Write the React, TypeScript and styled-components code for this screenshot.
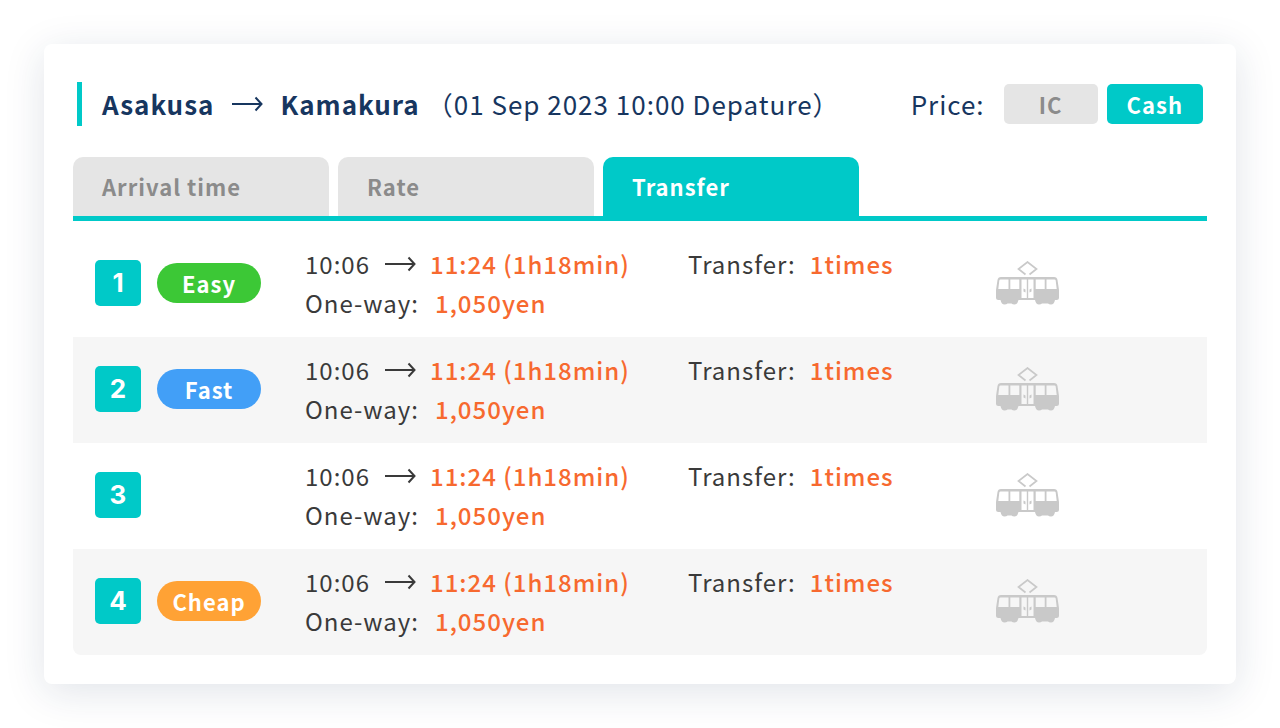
import React, { useState } from "react";
import styled, { createGlobalStyle } from "styled-components";

const teal = "#00c9c8";
const navy = "#17365f";
const orange = "#f7692f";

const GlobalStyle = createGlobalStyle`
  *, *::before, *::after { box-sizing: border-box; }
  body {
    margin: 0;
    background: #fff;
    color: #3a3a3a;
    font-family: "Noto Sans CJK JP", "Noto Sans", sans-serif;
    font-size: 24px;
    line-height: 39px;
    letter-spacing: 1px;
  }
  button { font: inherit; letter-spacing: inherit; border: 0; cursor: pointer; }
`;

const Page = styled.main`
  padding: 44px;
`;

const Card = styled.section`
  padding: 38px 29px 29px;
  border-radius: 8px;
  background: #fff;
  box-shadow: 0 8px 40px rgba(24, 44, 84, 0.13);
`;

const Header = styled.header`
  display: flex;
  align-items: center;
  justify-content: space-between;
  padding: 0 4px;
  color: ${navy};
  font-size: 26px;
  line-height: 44px;
`;

const Route = styled.h1`
  display: flex;
  align-items: center;
  margin: 0;
  padding-left: 20px;
  border-left: 5px solid ${teal};
  font-size: inherit;
  font-weight: 700;
`;

const HeaderArrow = styled.span`
  display: flex;
  padding: 0 17px;
`;

const Departure = styled.span`
  padding-left: 7px;
  font-weight: 400;
`;

const PriceGroup = styled.div`
  display: flex;
  align-items: center;
  gap: 9px;
`;

const PriceLabel = styled.span`
  padding-right: 10px;
`;

const PriceButton = styled.button<{ $active: boolean }>`
  min-width: 94px;
  height: 40px;
  padding: 0 20px;
  border-radius: 5px;
  background: ${(p) => (p.$active ? teal : "#e5e5e5")};
  color: ${(p) => (p.$active ? "#fff" : "#8b8b8b")};
  font-size: 22px;
  font-weight: 700;
  line-height: 40px;
`;

const Tabs = styled.div`
  display: flex;
  gap: 9px;
  margin-top: 31px;
  border-bottom: 5px solid ${teal};
`;

const Tab = styled.button<{ $active: boolean }>`
  flex: 0 1 256px;
  height: 59px;
  padding: 0 29px;
  border-radius: 10px 10px 0 0;
  background: ${(p) => (p.$active ? teal : "#e5e5e5")};
  color: ${(p) => (p.$active ? "#fff" : "#8b8b8b")};
  font-size: 22px;
  font-weight: 700;
  text-align: left;
`;

const Results = styled.ol`
  margin: 10px 0 0;
  padding: 0;
  list-style: none;
`;

const Result = styled.li`
  display: grid;
  grid-template-columns: 62px 148px 383px minmax(0, 1fr) 211px;
  align-items: center;
  padding: 13px 0 15px 22px;
  &:nth-child(even) { background: #f6f6f6; }
  &:last-child { border-radius: 0 0 8px 8px; }
`;

const Rank = styled.span`
  width: 46px;
  height: 46px;
  border-radius: 5px;
  background: ${teal};
  color: #fff;
  font-family: Inter, sans-serif;
  font-weight: 700;
  font-size: 26px;
  line-height: 46px;
  letter-spacing: 0;
  text-align: center;
`;

const Badge = styled.span<{ $color: string }>`
  display: block;
  width: 104px;
  border-radius: 20px;
  background: ${(p) => p.$color};
  color: #fff;
  font-size: 22px;
  font-weight: 700;
  line-height: 40px;
  text-align: center;
`;

const Line = styled.div`
  display: flex;
  align-items: center;
  gap: 14px;
`;

const Fare = styled(Line)`
  gap: 16px;
`;

const Strong = styled.strong`
  color: ${orange};
  font-weight: 500;
`;

const TransferCell = styled.div`
  align-self: start;
`;

const Arrow = () => (
  <svg width="32" height="16" viewBox="0 0 32 16" fill="none" stroke="currentColor" strokeWidth="2" aria-hidden="true">
    <path d="M1 8H30M24.500 1.500L30.500 8l-6 6.500" />
  </svg>
);

const Train = () => (
  <svg width="63" height="44" viewBox="0 0 63 44" fill="#c9c9c9" role="img" aria-label="Train">
    <path d="M29.500 13.500L22.500 8L31.500 1L40.500 8L33.500 13.500" fill="none" stroke="#c9c9c9" strokeWidth="1.700" />
    <path
      fillRule="evenodd"
      d="M5 16h53q3 0 3.500 3L63 29v7.500q0 2.500-2.500 2.500H59q-1 4.500-4 4.500-2 0-3-1h-6q-1 1-3 1-3 0-4-4.500H22.500q-1 4.500-4 4.500-2 0-3-1h-4q-1 1-3 1-3 0-4-4.500H2.500Q0 39 0 36.500V29l1.500-10Q2 16 5 16z
      M4.500 18.500q-1 0-1.200 1L2.300 28h10.200v-9.500z M14.300 18.500V28h9v-9.500z M25.500 18.500V37h5.300V18.500z M32.200 18.500V37h5.300V18.500z M39.700 18.500V28h9v-9.500z M50.500 18.500V28h10.200l-1-8.500q-.2-1-1.200-1z"
    />
    <path d="M27.500 27.500l2 1v3l-2-1zM35.500 27.500l-2 1v3l2-1z" />
  </svg>
);

type Row = { badge?: string; color?: string };
const rows: Row[] = [
  { badge: "Easy", color: "#3cc836" },
  { badge: "Fast", color: "#429ff7" },
  {},
  { badge: "Cheap", color: "#ffa235" },
];
const tabs = ["Arrival time", "Rate", "Transfer"];
const prices = ["IC", "Cash"];

export default function App() {
  const [tab, setTab] = useState("Transfer");
  const [price, setPrice] = useState("Cash");
  return (
    <Page>
      <GlobalStyle />
      <Card>
        <Header>
          <Route>
            Asakusa
            <HeaderArrow><Arrow /></HeaderArrow>
            Kamakura
            <Departure>（01 Sep 2023 10:00 Depature）</Departure>
          </Route>
          <PriceGroup role="group" aria-labelledby="price-label">
            <PriceLabel id="price-label">Price:</PriceLabel>
            {prices.map((p) => (
              <PriceButton key={p} type="button" $active={p === price} aria-pressed={p === price} onClick={() => setPrice(p)}>
                {p}
              </PriceButton>
            ))}
          </PriceGroup>
        </Header>
        <Tabs role="tablist">
          {tabs.map((t) => (
            <Tab key={t} type="button" role="tab" $active={t === tab} aria-selected={t === tab} onClick={() => setTab(t)}>
              {t}
            </Tab>
          ))}
        </Tabs>
        <Results>
          {rows.map((row, i) => (
            <Result key={i}>
              <Rank>{i + 1}</Rank>
              <div>{row.badge && <Badge $color={row.color!}>{row.badge}</Badge>}</div>
              <div>
                <Line>
                  <span>10:06</span>
                  <Arrow />
                  <Strong>11:24 (1h18min)</Strong>
                </Line>
                <Fare>
                  <span>One-way:</span>
                  <Strong>1,050yen</Strong>
                </Fare>
              </div>
              <TransferCell>
                <Line>
                  <span>Transfer:</span>
                  <Strong>1times</Strong>
                </Line>
              </TransferCell>
              <Train />
            </Result>
          ))}
        </Results>
      </Card>
    </Page>
  );
}
